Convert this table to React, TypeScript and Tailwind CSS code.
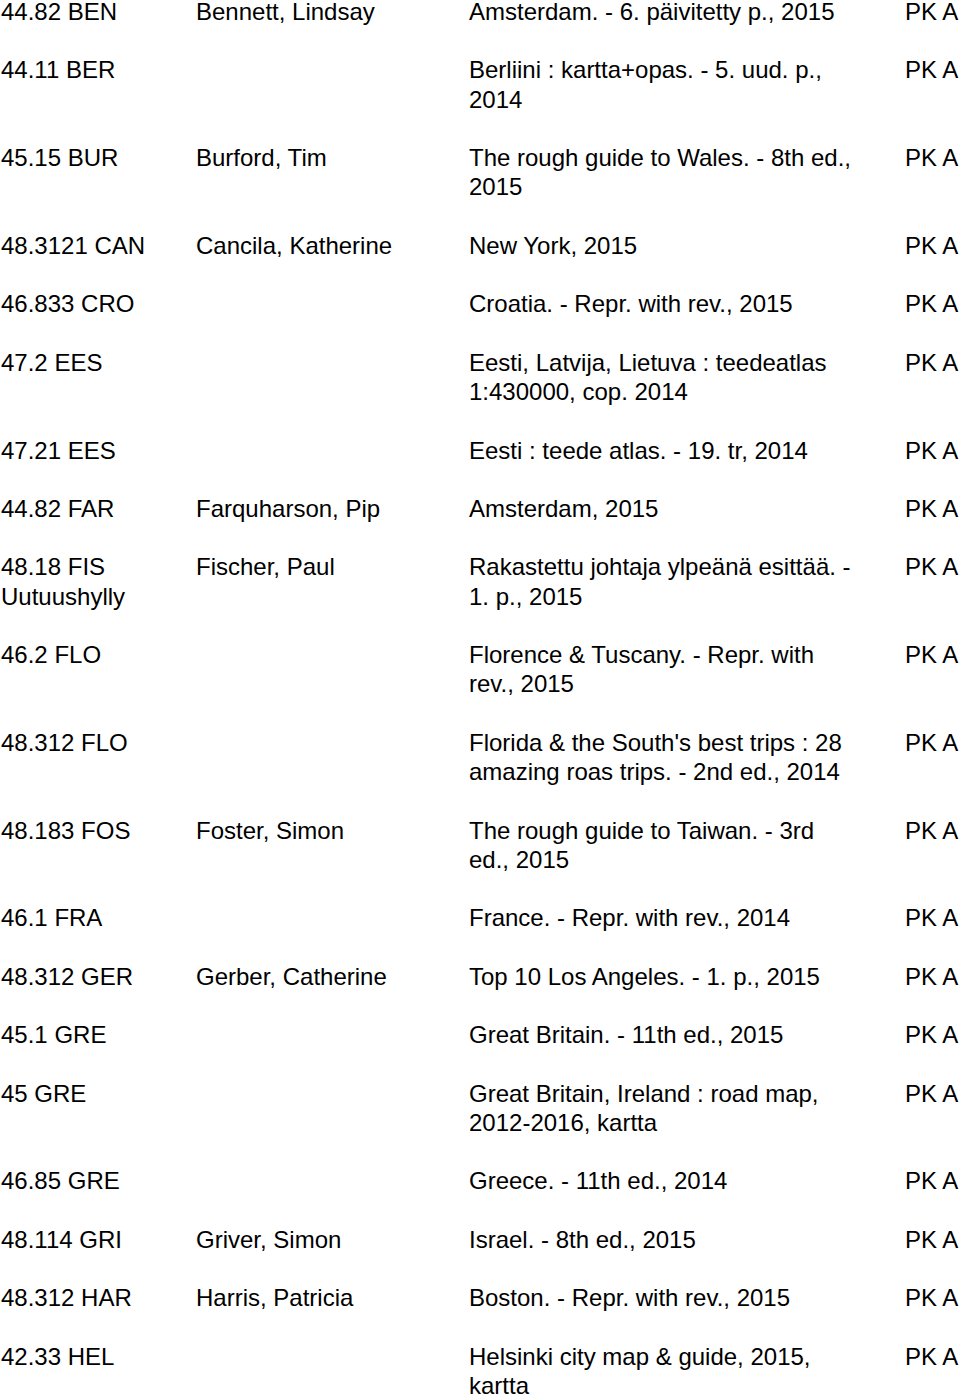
type Row = { call: string[]; author?: string; title: string[] };

const rows: Row[] = [
  { call: ["44.82 BEN"], author: "Bennett, Lindsay", title: ["Amsterdam. - 6. päivitetty p., 2015"] },
  { call: ["44.11 BER"], title: ["Berliini : kartta+opas. - 5. uud. p.,", "2014"] },
  { call: ["45.15 BUR"], author: "Burford, Tim", title: ["The rough guide to Wales. - 8th ed.,", "2015"] },
  { call: ["48.3121 CAN"], author: "Cancila, Katherine", title: ["New York, 2015"] },
  { call: ["46.833 CRO"], title: ["Croatia. - Repr. with rev., 2015"] },
  { call: ["47.2 EES"], title: ["Eesti, Latvija, Lietuva : teedeatlas", "1:430000, cop. 2014"] },
  { call: ["47.21 EES"], title: ["Eesti : teede atlas. - 19. tr, 2014"] },
  { call: ["44.82 FAR"], author: "Farquharson, Pip", title: ["Amsterdam, 2015"] },
  { call: ["48.18 FIS", "Uutuushylly"], author: "Fischer, Paul", title: ["Rakastettu johtaja ylpeänä esittää. -", "1. p., 2015"] },
  { call: ["46.2 FLO"], title: ["Florence & Tuscany. - Repr. with", "rev., 2015"] },
  { call: ["48.312 FLO"], title: ["Florida & the South's best trips : 28", "amazing roas trips. - 2nd ed., 2014"] },
  { call: ["48.183 FOS"], author: "Foster, Simon", title: ["The rough guide to Taiwan. - 3rd", "ed., 2015"] },
  { call: ["46.1 FRA"], title: ["France. - Repr. with rev., 2014"] },
  { call: ["48.312 GER"], author: "Gerber, Catherine", title: ["Top 10 Los Angeles. - 1. p., 2015"] },
  { call: ["45.1 GRE"], title: ["Great Britain. - 11th ed., 2015"] },
  { call: ["45 GRE"], title: ["Great Britain, Ireland : road map,", "2012-2016, kartta"] },
  { call: ["46.85 GRE"], title: ["Greece. - 11th ed., 2014"] },
  { call: ["48.114 GRI"], author: "Griver, Simon", title: ["Israel. - 8th ed., 2015"] },
  { call: ["48.312 HAR"], author: "Harris, Patricia", title: ["Boston. - Repr. with rev., 2015"] },
  { call: ["42.33 HEL"], title: ["Helsinki city map & guide, 2015,", "kartta"] },
];

export default function App() {
  return (
    <div className="min-h-screen bg-white text-black font-['Liberation_Sans',Arial,sans-serif] text-[24px] leading-[29.24px]">
      <div className="-mt-[3px] flex flex-col gap-[29.24px]">
        {rows.map((row, i) => (
          <div key={i} className="flex whitespace-nowrap">
            <div className="w-[196px] shrink-0 pl-[1px]">
              {row.call.map((line) => (
                <div key={line}>{line}</div>
              ))}
            </div>
            <div className="w-[273px] shrink-0">{row.author}</div>
            <div className="w-[436px] shrink-0">
              {row.title.map((line) => (
                <div key={line}>{line}</div>
              ))}
            </div>
            <div>PK A</div>
          </div>
        ))}
      </div>
    </div>
  );
}
